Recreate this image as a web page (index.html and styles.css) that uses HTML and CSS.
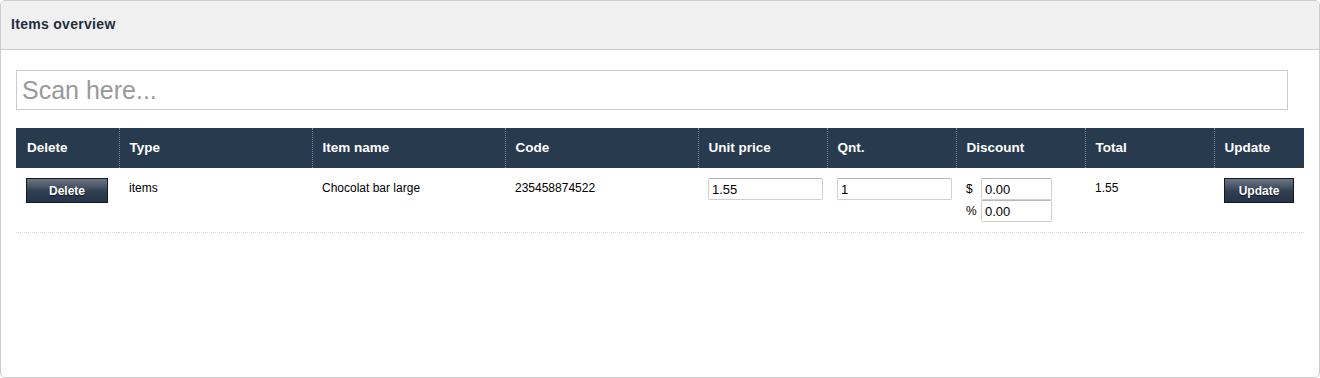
FILE: index.html
```html
<!DOCTYPE html>
<html lang="en">
<head>
    <meta charset="UTF-8">
    <meta name="viewport" content="width=device-width, initial-scale=1.0">
    <title>Items overview</title>
    <link rel="stylesheet" href="styles.css">
</head>
<body>
    <div class="panel">
        <div class="panel-heading">Items overview</div>
        <div class="panel-body">
            <input type="text" class="scan" placeholder="Scan here...">
            <table class="items">
                <colgroup>
                    <col style="width: 103px">
                    <col style="width: 193px">
                    <col style="width: 193px">
                    <col style="width: 193px">
                    <col style="width: 129px">
                    <col style="width: 129px">
                    <col style="width: 129px">
                    <col style="width: 129px">
                    <col style="width: 90px">
                </colgroup>
                <thead>
                    <tr>
                        <th>Delete</th>
                        <th>Type</th>
                        <th>Item name</th>
                        <th>Code</th>
                        <th>Unit price</th>
                        <th>Qnt.</th>
                        <th>Discount</th>
                        <th>Total</th>
                        <th>Update</th>
                    </tr>
                </thead>
                <tbody>
                    <tr>
                        <td><button class="btn btn-delete">Delete</button></td>
                        <td>items</td>
                        <td>Chocolat bar large</td>
                        <td>235458874522</td>
                        <td><input type="text" class="field" value="1.55"></td>
                        <td><input type="text" class="field" value="1"></td>
                        <td>
                            <div class="discount">
                                <span class="unit">$</span>
                                <input type="text" class="field small" value="0.00">
                            </div>
                            <div class="discount">
                                <span class="unit">%</span>
                                <input type="text" class="field small" value="0.00">
                            </div>
                        </td>
                        <td>1.55</td>
                        <td><button class="btn btn-update">Update</button></td>
                    </tr>
                </tbody>
            </table>
        </div>
    </div>
</body>
</html>
```

FILE: styles.css
```css
body {
    margin: 0;
    font-family: "Liberation Sans", Arial, sans-serif;
    font-size: 12px;
    color: #000;
    background: #fff;
}
.panel {
    height: 378px;
    box-sizing: border-box;
    border: 1px solid #cccccc;
    border-radius: 5px;
    overflow: hidden;
}
.panel-heading {
    height: 48px;
    line-height: 47px;
    padding: 0 10px;
    background: #f0f0f0;
    border-bottom: 1px solid #cccccc;
    font-size: 14px;
    font-weight: bold;
    color: #1f2e3d;
    letter-spacing: 0.3px;
}
.panel-body {
    padding: 20px 15px 0 15px;
}
.scan {
    display: block;
    width: 1272px;
    height: 40px;
    box-sizing: border-box;
    margin: 0 0 18px 0;
    padding: 0 5px;
    border: 1px solid #cccccc;
    font-family: "Liberation Sans", Arial, sans-serif;
    font-size: 25px;
    color: #333;
    outline: none;
}
.scan::placeholder {
    color: #999999;
}
.items {
    width: 100%;
    table-layout: fixed;
    border-collapse: collapse;
}
.items th {
    height: 40px;
    box-sizing: border-box;
    padding: 0 10px 2px 10px;
    background: #283a4e;
    color: #fff;
    font-size: 13.5px;
    font-weight: bold;
    text-align: left;
    border-right: 1px dotted #7d8590;
}
.items th:first-child {
    padding-left: 11px;
}
.items th:last-child {
    border-right: none;
}
.items td {
    padding: 10px;
    vertical-align: top;
    line-height: 20px;
    border-bottom: 1px dotted #d6d6d6;
}
.field {
    display: block;
    width: 115px;
    height: 22px;
    box-sizing: border-box;
    margin: 0;
    padding: 0 3px;
    border: 1px solid #d0d0d0;
    border-top-color: #b8b8b8;
    border-radius: 2px;
    font-family: "Liberation Sans", Arial, sans-serif;
    font-size: 13px;
    color: #000;
}
.field.small {
    width: 71px;
}
.discount {
    display: flex;
    align-items: center;
}
.unit {
    width: 15px;
    font-size: 12px;
}
.btn {
    display: block;
    height: 25px;
    margin: 0;
    padding: 0;
    border: 1px solid #101a26;
    background: linear-gradient(#6d7783, #2f3e50 55%, #24344a);
    color: #fff;
    font-family: "Liberation Sans", Arial, sans-serif;
    font-size: 12px;
    font-weight: bold;
    text-shadow: 0 1px 1px rgba(0, 0, 0, 0.6);
    cursor: pointer;
}
.btn-delete {
    width: 82px;
}
.btn-update {
    width: 70px;
}
```
